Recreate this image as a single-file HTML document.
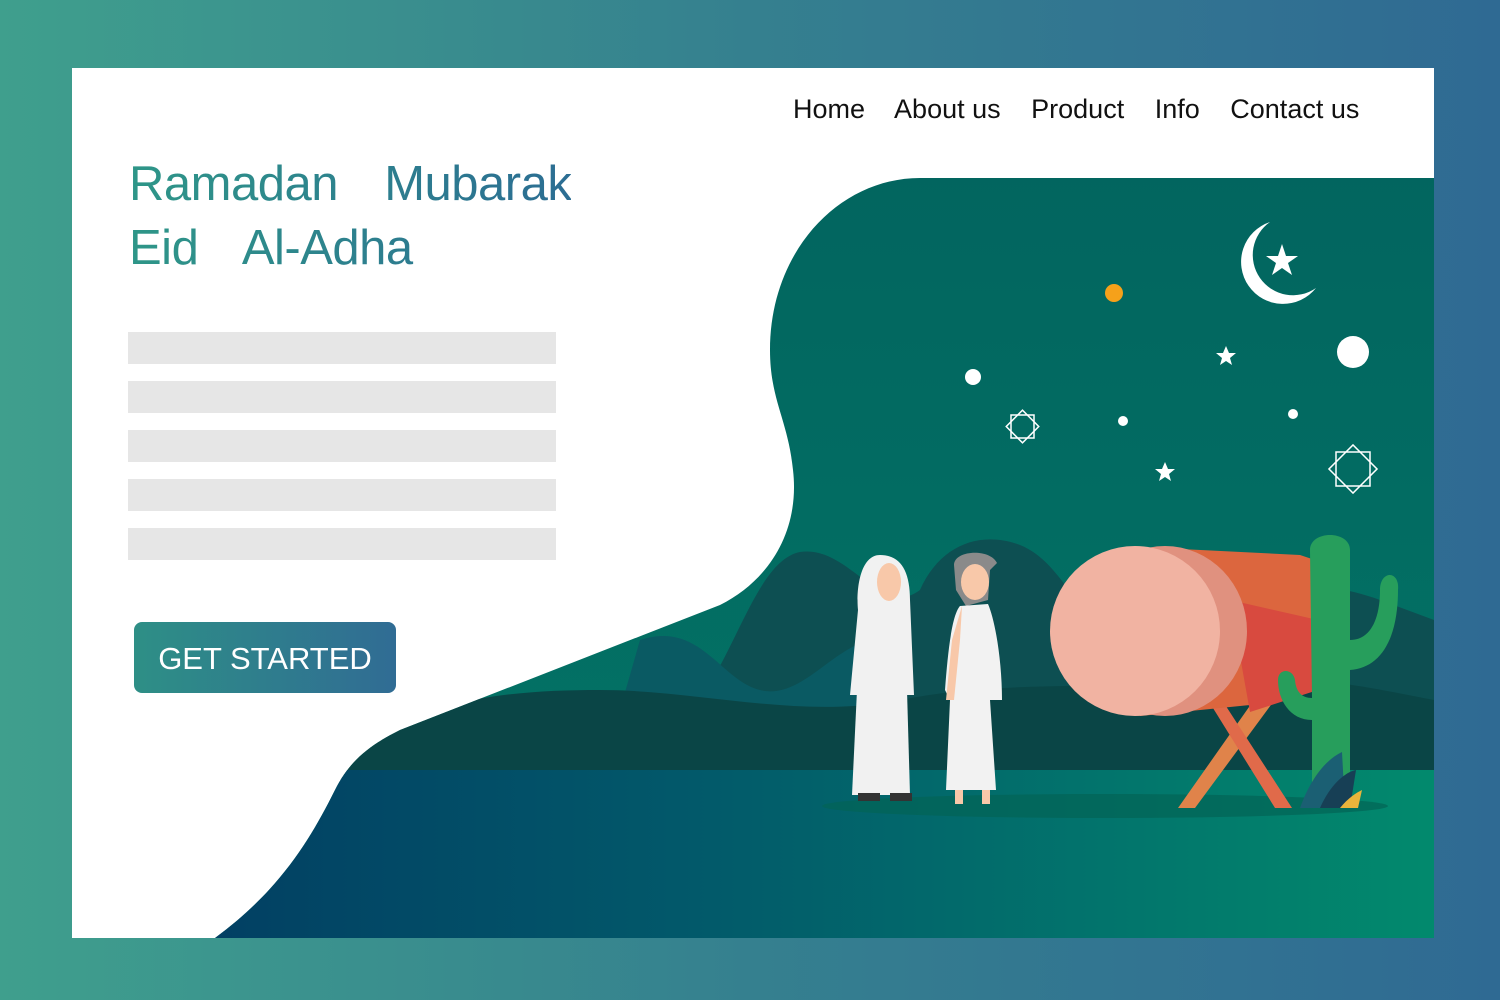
<!DOCTYPE html>
<html><head><meta charset="utf-8"><style>
html,body{margin:0;padding:0;width:1500px;height:1000px;overflow:hidden;background:linear-gradient(90deg,#3f9f8d,#35808f 50%,#2f6a93);font-family:"Liberation Sans",sans-serif}
.card{position:absolute;left:72px;top:68px;width:1362px;height:870px;background:#fff;overflow:hidden}
nav{position:absolute;top:26px;left:721px;font-size:27px;color:#111;white-space:nowrap}
nav span{margin-right:23px}
h1{position:absolute;left:57px;top:84px;margin:0;font-size:49px;line-height:64px;font-weight:normal;letter-spacing:-0.5px;background:linear-gradient(90deg,#2e9688,#2c6d93);-webkit-background-clip:text;color:transparent;word-spacing:10px}
.bar{position:absolute;left:56px;width:428px;height:32px;background:#e6e6e6}
.btn{position:absolute;left:62px;top:554px;width:262px;height:71px;border-radius:8px;background:linear-gradient(90deg,#2e8f86,#306c94);color:#fff;font-size:31px;line-height:74px;text-align:center}
svg{position:absolute;left:0;top:0}
</style></head><body>
<div class="card">
<svg width="1362" height="870" viewBox="72 68 1362 870">
<defs>
<linearGradient id="sky" x1="0" y1="0" x2="0" y2="1"><stop offset="0" stop-color="#02655f"/><stop offset="1" stop-color="#037566"/></linearGradient>
<linearGradient id="gr" x1="0" y1="0" x2="1" y2="0"><stop offset="0" stop-color="#023f63"/><stop offset="0.4" stop-color="#02596a"/><stop offset="1" stop-color="#028a6d"/></linearGradient>
<clipPath id="cp"><path d="M920,178 L1434,178 L1434,938 L215,938 C280,890 310,840 335,790 C350,760 370,745 400,730 L720,605 C770,580 800,530 793,470 C788,420 770,400 770,350 C770,250 840,178 920,178Z"/></clipPath>
</defs>
<g clip-path="url(#cp)">
<rect x="200" y="170" width="1240" height="780" fill="url(#sky)"/>
<path d="M700,700 C740,640 760,560 800,552 C850,545 880,620 920,590 C940,545 980,530 1020,545 C1070,565 1080,640 1120,610 C1160,580 1300,570 1380,600 L1434,620 L1434,780 L700,780Z" fill="#0d4f52"/>
<path d="M640,640 C700,620 720,680 760,690 C800,700 830,650 870,640 L900,780 L600,780Z" fill="#0a5a63"/>
<path d="M300,780 C400,700 500,690 600,690 C700,690 800,720 900,700 C1000,680 1100,690 1200,680 C1300,670 1380,690 1434,700 L1434,780Z" fill="#0a4546"/>
<rect x="200" y="770" width="1240" height="170" fill="url(#gr)"/>
</g>
<ellipse cx="1105" cy="806" rx="283" ry="12" fill="#036456" opacity=".7"/>
<circle cx="1114" cy="293" r="9" fill="#f6a11a"/>
<circle cx="1353" cy="352" r="16" fill="#fff"/>
<circle cx="973" cy="377" r="8" fill="#fff"/>
<circle cx="1123" cy="421" r="5" fill="#fff"/>
<circle cx="1293" cy="414" r="5" fill="#fff"/>
<path d="M1270,222 A42,42 0 1 0 1316,288 A36,36 0 1 1 1270,222Z" fill="#fff"/>
<polygon points="1282,244 1286,256 1298,256 1288,263 1292,275 1282,268 1272,275 1276,263 1266,256 1278,256" fill="#fff"/>
<polygon points="1226,346 1229,353 1236,353 1230,358 1232,365 1226,361 1220,365 1222,358 1216,353 1223,353" fill="#fff"/>
<polygon points="1165,462 1168,469 1175,469 1169,474 1171,481 1165,477 1159,481 1161,474 1155,469 1162,469" fill="#fff"/>
<g fill="none" stroke="#fff" stroke-width="1.5"><rect x="1011" y="415" width="23" height="23"/><rect x="1011" y="415" width="23" height="23" transform="rotate(45 1022.5 426.5)"/>
<rect x="1336" y="452" width="34" height="34"/><rect x="1336" y="452" width="34" height="34" transform="rotate(45 1353 469)"/></g>
<path d="M880,555 C860,555 856,590 858,610 L850,695 L914,695 L910,600 C910,570 900,555 880,555Z" fill="#f1f1f1"/>
<ellipse cx="889" cy="582" rx="12" ry="19" fill="#f8c8a9"/>
<path d="M857,690 L852,795 L910,795 L907,690Z" fill="#f1f1f1"/>
<rect x="858" y="793" width="22" height="8" fill="#333"/><rect x="890" y="793" width="22" height="8" fill="#333"/>
<path d="M954,565 C954,550 990,548 997,563 L990,570 L988,600 L966,606 L956,590Z" fill="#8a8a8a"/>
<ellipse cx="975" cy="582" rx="14" ry="18" fill="#f8c8a9"/>
<path d="M960,606 L988,604 C995,620 1002,660 1002,700 L990,700 L996,790 L946,790 L950,700 L945,690 C948,650 952,615 960,606Z" fill="#f2f2f2"/>
<path d="M962,606 L952,640 L946,700 L954,700 L960,640Z" fill="#f8c8a9"/>
<rect x="955" y="790" width="8" height="14" fill="#f8c8a9"/><rect x="982" y="790" width="8" height="14" fill="#f8c8a9"/>
<path d="M1178,808 L1268,680 L1282,690 L1195,808Z" fill="#e0834a"/>
<path d="M1208,700 L1275,808 L1292,808 L1222,700Z" fill="#e06a4a"/>
<path d="M1140,547 L1300,555 L1315,560 L1318,690 L1250,705 L1140,716Z" fill="#dc663e"/>
<path d="M1230,600 L1318,620 L1318,690 L1250,712 Z" fill="#d84a3f"/>
<ellipse cx="1165" cy="631" rx="82" ry="85" fill="#e0917f"/>
<ellipse cx="1135" cy="631" rx="85" ry="85" fill="#f1b3a2"/>
<path d="M1310,550 C1310,530 1350,530 1350,550 L1350,640 C1370,640 1380,620 1380,590 C1380,570 1400,570 1398,590 C1398,640 1380,668 1350,670 L1350,790 L1312,790 L1312,720 C1290,720 1278,700 1278,680 C1278,668 1293,668 1295,680 C1296,692 1302,698 1312,698Z" fill="#279e5c"/>
<path d="M1300,808 C1310,780 1325,760 1342,752 L1345,808Z" fill="#1b5f73"/>
<path d="M1320,808 C1330,785 1345,772 1356,770 L1350,808Z" fill="#173f55"/>
<path d="M1340,808 C1348,798 1356,793 1362,790 L1358,808Z" fill="#e9b43b"/>
</svg>
<nav><span>Home</span> <span>About us</span> <span>Product</span> <span>Info</span> <span>Contact us</span></nav>
<h1>Ramadan&nbsp; Mubarak<br>Eid&nbsp; Al-Adha</h1>
<div class="bar" style="top:264px"></div>
<div class="bar" style="top:313px"></div>
<div class="bar" style="top:362px"></div>
<div class="bar" style="top:411px"></div>
<div class="bar" style="top:460px"></div>
<div class="btn">GET STARTED</div>
</div>
</body></html>
